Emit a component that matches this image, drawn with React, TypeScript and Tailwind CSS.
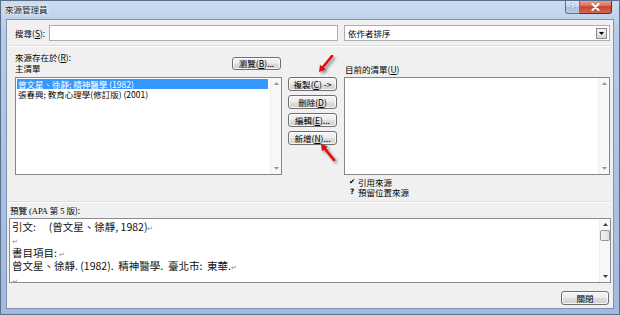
import React from 'react';

function Key({ k }: { k: string }) {
  return (
    <>
      (<span className="underline underline-offset-[1px]">{k}</span>)
    </>
  );
}

function Btn({ children, className = '' }: { children: React.ReactNode; className?: string }) {
  return (
    <div
      className={`flex items-center justify-center rounded-[3px] border border-[#707070] bg-[linear-gradient(180deg,#f4f4f4_0%,#ececec_48%,#dedede_52%,#d0d0d0_100%)] shadow-[inset_0_0_0_1px_rgba(255,255,255,0.75)] text-[8.5px] leading-none text-black ${className}`}
    >
      {children}
    </div>
  );
}

function Tri({ up = false, color = '#8a8a8a' }: { up?: boolean; color?: string }) {
  return (
    <svg width="5" height="3" viewBox="0 0 5 3">
      <path d={up ? 'M0 3 L2.5 0 L5 3 Z' : 'M0 0 L5 0 L2.5 3 Z'} fill={color} />
    </svg>
  );
}

function VScroll({ thumb = false, dark = false }: { thumb?: boolean; dark?: boolean }) {
  const c = dark ? '#3c3c3c' : '#9a9a9a';
  return (
    <div className="w-[11px] h-full flex flex-col items-center bg-[#f7f7f7] border-l border-[#ededed]">
      <div className="h-[11px] flex items-center justify-center">
        <Tri up color={c} />
      </div>
      {thumb && (
        <div className="w-[10px] h-[11px] rounded-[2px] border border-[#979797] bg-[linear-gradient(90deg,#f2f2f2,#e0e0e0)]" />
      )}
      <div className="flex-1" />
      <div className="h-[11px] flex items-center justify-center">
        <Tri color={c} />
      </div>
    </div>
  );
}

function RedArrow({ down }: { down: boolean }) {
  return (
    <svg
      width="16"
      height="18"
      viewBox="0 0 16 18"
      className="drop-shadow-[2px_2px_1.5px_rgba(0,0,0,0.45)]"
    >
      {down ? (
        <>
          <path d="M14 1 L4.8 12.3" stroke="#e30b0b" strokeWidth="2.6" strokeLinecap="round" />
          <path d="M1 17 L7.8 14.6 L2 9.8 Z" fill="#e30b0b" />
        </>
      ) : (
        <>
          <path d="M14 17 L4.8 5.7" stroke="#e30b0b" strokeWidth="2.6" strokeLinecap="round" />
          <path d="M1 1 L7.8 3.4 L2 8.2 Z" fill="#e30b0b" />
        </>
      )}
    </svg>
  );
}

function Ret() {
  return <span className="text-[7px] leading-none text-[#8a8a8a]">↵</span>;
}

export default function App() {
  return (
    <div className="relative w-[620px] h-[315px] overflow-hidden border border-[#5b6f8d] bg-[linear-gradient(180deg,#cddcef_0%,#b5cbe8_10%,#a9c2e4_55%,#a0bae0_100%)] px-[5px] pb-[5px] flex flex-col font-['Noto_Sans_CJK_TC','Noto_Sans',sans-serif] text-black">
      {/* title bar */}
      <div className="h-[18px] flex items-start justify-between">
        <div className="-ml-[1px] mt-[3px] text-[8.5px] leading-[10px] text-[#1b1b1b] [text-shadow:0_0_5px_#fff,0_0_2px_#fff]">
          來源管理員
        </div>
        <div className="-mt-[1px] mr-[2px] flex">
          <div className="w-[15px] h-[14px] rounded-bl-[3px] border border-[#5f718d] border-t-0 bg-[linear-gradient(180deg,#dfe8f4_0%,#c6d5ea_50%,#aebfd9_52%,#b9cbe4_100%)] flex items-center justify-center text-[8px] font-bold leading-none text-white [text-shadow:0_0_2px_#33435a]">
            ?
          </div>
          <div className="w-[32px] h-[14px] rounded-br-[3px] border border-[#6b2a22] border-t-0 border-l-0 bg-[linear-gradient(180deg,#e9a99c_0%,#d7705e_45%,#c7432e_52%,#d2684f_100%)] flex items-center justify-center">
            <svg width="9" height="8" viewBox="0 0 9 8">
              <path d="M1.5 1 L7.5 7 M7.5 1 L1.5 7" stroke="#fff" strokeWidth="2" strokeLinecap="round" />
            </svg>
          </div>
        </div>
      </div>

      {/* client */}
      <div className="flex-1 flex flex-col bg-[#f0f0f0] border border-[#8193ad]">
        <div className="mt-[5px] h-[16px] flex pl-[8px] pr-[3px]">
          <div className="w-[34px] flex items-center text-[8.5px] leading-none">
            搜尋<Key k="S" />:
          </div>
          <div className="w-[289px] h-full border border-[#abadb3] bg-white" />
          <div className="ml-[6px] flex-1 h-full border border-[#abadb3] bg-white flex items-center pl-[3px] pr-[2px]">
            <span className="flex-1 text-[8.5px] leading-none">依作者排序</span>
            <div className="w-[11px] h-[11px] border border-[#8a8a8a] bg-[linear-gradient(180deg,#f4f4f4,#d6d6d6)] flex items-center justify-center">
              <Tri color="#000" />
            </div>
          </div>
        </div>

        <div className="mt-[4px] mx-[2px] border-t border-b border-t-[#d7dde4] border-b-white" />

        <div className="flex pl-[8px] pr-[3px]">
          {/* left column */}
          <div className="w-[267px] flex flex-col">
            <div className="h-[30px] flex justify-between">
              <div className="pt-[5px] text-[8.5px] leading-[11px]">
                <div>
                  來源存在於<Key k="R" />:
                </div>
                <div>主清單</div>
              </div>
              <Btn className="mt-[10px] mr-[1px] w-[49px] h-[13px]">
                瀏覽<Key k="B" />...
              </Btn>
            </div>
            <div className="h-[98px] flex border border-[#828790] bg-white">
              <div className="flex-1 pt-[1px] text-[8.5px]">
                <div className="ml-[1px] mr-[2px] h-[10px] leading-[10px] bg-[#3399ff] text-white pl-[1px] whitespace-nowrap">
                  曾文星、徐靜; 精神醫學 (1982)
                </div>
                <div className="ml-[1px] h-[10px] leading-[10px] pl-[1px] whitespace-nowrap">
                  張春興; 教育心理學(修訂版) (2001)
                </div>
              </div>
              <VScroll />
            </div>
          </div>

          {/* middle buttons */}
          <div className="w-[49px] ml-[6px] pt-[30px] flex flex-col gap-[4px]">
            <Btn className="h-[14px]">
              複製<Key k="C" /> -&gt;
            </Btn>
            <Btn className="h-[14px]">
              刪除<Key k="D" />
            </Btn>
            <Btn className="h-[14px]">
              編輯<Key k="E" />...
            </Btn>
            <Btn className="h-[14px]">
              新增<Key k="N" />...
            </Btn>
          </div>

          {/* right column */}
          <div className="w-[266px] ml-[7px] flex flex-col">
            <div className="h-[30px] pt-[17px] pl-[1px] text-[8.5px] leading-[11px]">
              目前的清單<Key k="U" />
            </div>
            <div className="h-[98px] flex border border-[#828790] bg-white">
              <div className="flex-1" />
              <VScroll />
            </div>
            <div className="mt-[2px] text-[8.5px]">
              <div className="flex h-[10px] items-center">
                <span className="w-[14px] pl-[5px] text-[7.5px] leading-none font-['DejaVu_Sans',sans-serif]">✔</span>
                <span className="leading-none">引用來源</span>
              </div>
              <div className="flex h-[10px] items-center">
                <span className="w-[14px] pl-[6px] text-[7.5px] leading-none font-bold font-['DejaVu_Sans',sans-serif]">?</span>
                <span className="leading-none">預留位置來源</span>
              </div>
            </div>
          </div>
        </div>

        <div className="mt-[4px] mx-[2px] border-t border-b border-t-[#d7dde4] border-b-white" />

        <div className="mt-[2px] pl-[3px] h-[11px] text-[8.5px] leading-[11px]">
          預覽 <span className="font-['Liberation_Serif',serif]">(APA</span> 第{' '}
          <span className="font-['Liberation_Serif',serif]">5</span> 版):
        </div>

        <div className="mt-[2px] mx-[2px] h-[65px] flex border border-[#8b8c8f] bg-white">
          <div className="flex-1 pl-[2px] pt-[1px] overflow-hidden text-[10.5px] leading-[13px] text-[#111] whitespace-pre">
            <div className="h-[13px]">
              引文:{'　 '}(曾文星、徐靜, 1982)
              <Ret />
            </div>
            <div className="h-[13px]">
              <Ret />
            </div>
            <div className="h-[13px]">
              書目項目: <Ret />
            </div>
            <div className="h-[14px]">
              曾文星、徐靜. (1982).  精神醫學.  臺北市:  東華.
              <Ret />
            </div>
            <div className="h-[13px]">
              <Ret />
            </div>
          </div>
          <VScroll thumb dark />
        </div>

        <div className="mt-[8px] flex justify-end pr-[4px]">
          <Btn className="w-[48px] h-[14px]">關閉</Btn>
        </div>
      </div>

      {/* annotation arrows */}
      <div className="absolute left-[317px] top-[54px]">
        <RedArrow down />
      </div>
      <div className="absolute left-[319px] top-[142px]">
        <RedArrow down={false} />
      </div>
    </div>
  );
}
